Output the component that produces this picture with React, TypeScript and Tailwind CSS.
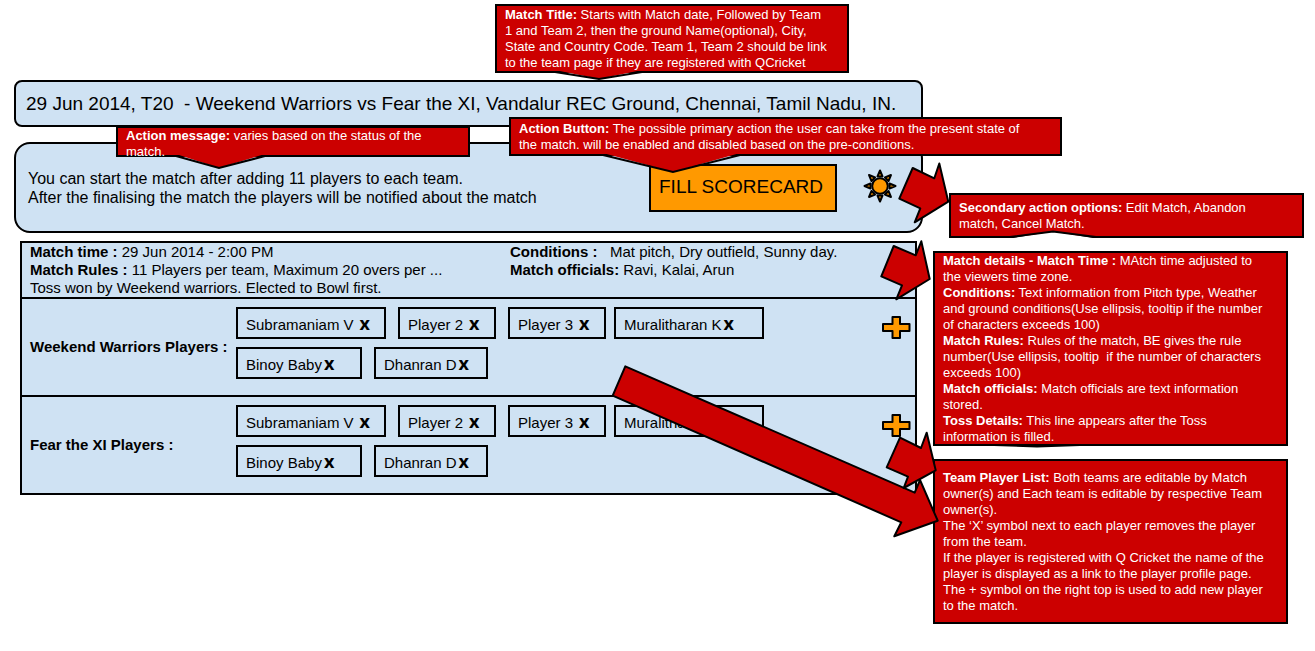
import type { ReactNode } from "react";

const matchDetails = {
  time: "29 Jun 2014 - 2:00 PM",
  rules: "11 Players per team, Maximum 20 overs per ...",
  toss: "Toss won by Weekend warriors. Elected to Bowl first.",
  conditions: "Mat pitch, Dry outfield, Sunny day.",
  officials: "Ravi, Kalai, Arun",
};

type Player = { name: string; box: string; gap: string };

const playerRows: Player[][] = [
  [
    { name: "Subramaniam V", box: "w-[150px] mr-3", gap: "ml-1" },
    { name: "Player 2", box: "w-[98px] mr-3", gap: "ml-1" },
    { name: "Player 3", box: "w-[98px] mr-2", gap: "ml-1" },
    { name: "Muralitharan K", box: "w-[150px]", gap: "ml-0" },
  ],
  [
    { name: "Binoy Baby", box: "w-[126px] mr-3", gap: "ml-0" },
    { name: "Dhanran D", box: "w-[114px]", gap: "ml-0" },
  ],
];

function PlayerChip({ player }: { player: Player }) {
  return (
    <li className={`flex h-8 shrink-0 items-center border-2 border-black pl-2 pt-1 ${player.box}`}>
      <span className="whitespace-nowrap">{player.name}</span>
      <button
        type="button"
        aria-label={`Remove ${player.name}`}
        className={`pb-1 pl-[2px] font-['Open_Sans',sans-serif] text-lg leading-4 font-bold ${player.gap}`}
      >
        x
      </button>
    </li>
  );
}

function TeamSection({ label }: { label: string }) {
  return (
    <section className="flex h-[98px] items-center border-t-2 border-black pl-2">
      <h2 className="w-[206px] shrink-0 font-bold whitespace-nowrap">{label}</h2>
      <div className="flex flex-1 flex-col gap-2 self-start pt-2">
        {playerRows.map((row, i) => (
          <ul key={i} className="flex">
            {row.map((player) => (
              <PlayerChip key={player.name} player={player} />
            ))}
          </ul>
        ))}
      </div>
      <button type="button" aria-label="Add player" className="mr-1 self-start pt-4">
        <svg width="30" height="26" viewBox="0 0 30 26" className="block">
          <path
            d="M11.500 2h7.500v7h9.500v7h-9.500v7h-7.500v-7h-9.500v-7h9.500z"
            fill="#ff9900"
            stroke="#000"
            strokeWidth="2"
            strokeLinejoin="round"
          />
        </svg>
      </button>
    </section>
  );
}

function SunIcon() {
  return (
    <svg width="34" height="34" viewBox="-17 -17 34 34" className="block">
      <g fill="#ff9900" stroke="#000" strokeWidth="2" strokeLinejoin="round">
        {[0, 45, 90, 135, 180, 225, 270, 315].map((angle) => (
          <path key={angle} d="M-2.500-9.500 0-15.500 2.500-9.500z" transform={`rotate(${angle})`} />
        ))}
        <circle r="7.800" />
      </g>
    </svg>
  );
}

function Callout({
  className,
  children,
  tail,
}: {
  className: string;
  children: ReactNode;
  tail: ReactNode;
}) {
  return (
    <div
      className={`flex flex-col border-2 border-black bg-[#cc0000] pl-2 text-[13px] leading-4 whitespace-pre text-white ${className}`}
    >
      {tail}
      <p className="relative">{children}</p>
    </div>
  );
}

/* Pointer hanging from the lower edge of a callout; its top covers the border. */
function Tail({ className, width, height, tip }: { className: string; width: number; height: number; tip: number }) {
  return (
    <svg width={width} height={height} className={`absolute top-full overflow-visible ${className}`}>
      <path d={`M0 -1H${width}L${tip} ${height}Z`} fill="#cc0000" />
      <path d={`M0 1L${tip} ${height}L${width} 1`} fill="none" stroke="#000" strokeWidth="2" />
    </svg>
  );
}

/* Slight outward swelling of the lower border. */
function Bulge() {
  return (
    <svg width="86" height="4" className="absolute top-full left-[59px] overflow-visible">
      <path d="M0 1 43 2.500 86 1" fill="none" stroke="#000" strokeWidth="2" />
    </svg>
  );
}

function Arrows() {
  const shapes = [
    "M625.3 366.3 914.7 492.7 920 480 937.700 520.7 894.3 536.3 901.3 522.3 612.7 395.7z",
    "M912.7 168 934.3 178.3 939.3 163.5 948.3 201.7 914.7 222.3 920.3 208.3 899.3 198.7z",
    "M893.7 246 915.7 255.3 921.3 241.3 929.7 279 896.3 299.3 902 285.3 881.3 276.3z",
    "M900 437.7 921 448 926.7 432.7 935.7 470.3 903.7 488 908 476.7 886.7 467.3z",
  ];
  return (
    <svg
      width="340"
      height="560"
      viewBox="593 0 340 560"
      aria-hidden="true"
      className="pointer-events-none absolute top-0 right-0 z-20 overflow-visible"
    >
      {shapes.map((d) => (
        <path key={d} d={d} fill="#cc0000" stroke="#000" strokeWidth="2" strokeLinejoin="round" />
      ))}
    </svg>
  );
}

export default function App() {
  return (
    <div className="flex items-start bg-white font-['Liberation_Sans',Arial,sans-serif] text-black">
      <main className="relative min-w-0 flex-1 pt-20 pr-[10px] pl-[14px]">
        <h1 className="flex h-[47px] items-center rounded-lg border-2 border-black bg-[#cfe2f3] pt-[2px] pl-[10px] text-[19px] whitespace-pre">
          29 Jun 2014, T20{"  "}- Weekend Warriors vs Fear the XI, Vandalur REC Ground, Chennai, Tamil Nadu, IN.
        </h1>

        <section className="mt-[15px] flex h-[91px] items-center rounded-2xl border-2 border-black bg-[#cfe2f3] pr-6 pl-3">
          <p className="text-base leading-[19px] whitespace-nowrap">
            You can start the match after adding 11 players to each team.
            <br />
            After the finalising the match the players will be notified about the match
          </p>
          <button
            type="button"
            className="ml-auto h-12 w-[188px] shrink-0 border-2 border-black bg-[#ff9900] pl-2 text-left text-[19px] whitespace-nowrap"
          >
            FILL SCORECARD
          </button>
          <button type="button" aria-label="Secondary actions" className="ml-[26px] pb-1">
            <SunIcon />
          </button>
        </section>

        <div className="mx-[6px] mt-2 border-2 border-black bg-[#cfe2f3] text-[15px]">
          <section className="flex h-[54px] pl-2 leading-[18px] whitespace-pre">
            <p className="w-[480px] shrink-0">
              <b>Match time :</b> {matchDetails.time}
              <br />
              <b>Match Rules :</b> {matchDetails.rules}
              <br />
              {matchDetails.toss}
            </p>
            <p>
              <b>Conditions :</b>
              {"   "}
              {matchDetails.conditions}
              <br />
              <b>Match officials:</b> {matchDetails.officials}
            </p>
          </section>
          <TeamSection label="Weekend Warriors Players :" />
          <TeamSection label="Fear the XI Players :" />
        </div>

        <Callout
          className="absolute top-1 left-[495px] h-[69px] w-[354px] justify-center"
          tail={<Tail className="left-[58px]" width={87} height={8} tip={44} />}
        >
          <b>Match Title:</b> Starts with Match date, Followed by Team{"\n"}
          1 and Team 2, then the ground Name(optional), City,{"\n"}
          State and Country Code. Team 1, Team 2 should be link{"\n"}
          to the team page if they are registered with QCricket
        </Callout>
        <Callout
          className="absolute top-[126px] left-[116px] h-[31px] w-[354px]"
          tail={<Tail className="left-[58px]" width={89} height={13} tip={43} />}
        >
          <b>Action message:</b> varies based on the status of the{"\n"}
          match.
        </Callout>
        <Callout
          className="absolute top-[117px] left-[509px] z-10 h-[39px] w-[553px] justify-center"
          tail={<Tail className="left-[92px]" width={137} height={18} tip={70} />}
        >
          <b>Action Button:</b> The possible primary action the user can take from the present state of{"\n"}
          the match. will be enabled and disabled based on the pre-conditions.
        </Callout>
        <Arrows />
      </main>

      <aside className="flex w-[382px] shrink-0 flex-col gap-[13px] pt-[193px]">
        <Callout
          className="relative ml-4 h-[45px] w-[355px] justify-center"
          tail={
            <svg width="86" height="6" className="absolute top-full left-[59px] overflow-visible">
              <path d="M0 2.500 43-4.500 86 2.500z" fill="#fff" />
              <path d="M0 1 43-4.500 86 1" fill="none" stroke="#000" strokeWidth="2" />
            </svg>
          }
        >
          <b>Secondary action options:</b> Edit Match, Abandon{"\n"}
          match, Cancel Match.
        </Callout>
        <Callout className="relative h-[195px] w-[355px] justify-center" tail={<Bulge />}>
          <b>Match details - Match Time :</b> MAtch time adjusted to{"\n"}
          the viewers time zone.{"\n"}
          <b>Conditions:</b> Text information from Pitch type, Weather{"\n"}
          and ground conditions(Use ellipsis, tooltip if the number{"\n"}
          of characters exceeds 100){"\n"}
          <b>Match Rules:</b> Rules of the match, BE gives the rule{"\n"}
          number(Use ellipsis, tooltip{"  "}if the number of characters{"\n"}
          exceeds 100){"\n"}
          <b>Match officials:</b> Match officials are text information{"\n"}
          stored.{"\n"}
          <b>Toss Details:</b> This line appears after the Toss{"\n"}
          information is filled.
        </Callout>
        <Callout className="relative h-[165px] w-[355px] justify-center" tail={<Bulge />}>
          <b>Team Player List:</b> Both teams are editable by Match{"\n"}
          owner(s) and Each team is editable by respective Team{"\n"}
          owner(s).{"\n"}
          The ‘X’ symbol next to each player removes the player{"\n"}
          from the team.{"\n"}
          If the player is registered with Q Cricket the name of the{"\n"}
          player is displayed as a link to the player profile page.{"\n"}
          The + symbol on the right top is used to add new player{"\n"}
          to the match.
        </Callout>
      </aside>
    </div>
  );
}
